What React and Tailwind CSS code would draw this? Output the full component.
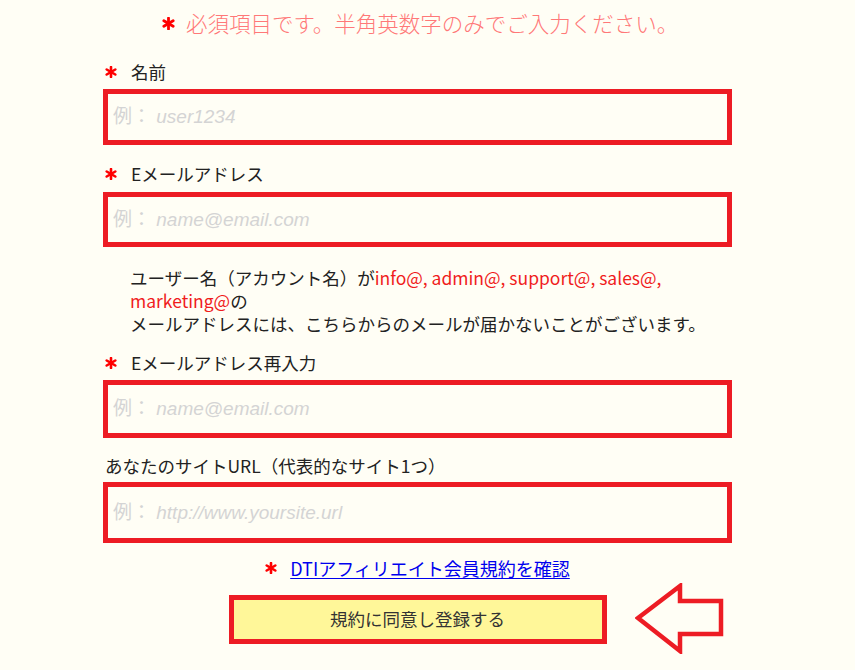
import React from 'react';

const RED = '#ed1c24';

// 赤いアスタリスク
const Star = ({ className = '' }) => (
  <svg viewBox="0 0 12 12" className={`w-[12px] h-[12px] shrink-0 ${className}`}>
    <g stroke="#ff0000" strokeWidth="2.6" strokeLinecap="round">
      <line x1="6" y1="1" x2="6" y2="11" />
      <line x1="1.7" y1="3.5" x2="10.3" y2="8.5" />
      <line x1="1.7" y1="8.5" x2="10.3" y2="3.5" />
    </g>
  </svg>
);

const Label = ({ children, required = true, className = '' }) => (
  <div className={`flex items-center h-[24px] text-[17.5px] leading-[24px] text-[#222] ${className}`}>
    {required && <Star className="ml-[2px] mr-[14px]" />}
    <span className="whitespace-nowrap">{children}</span>
  </div>
);

const Field = ({ placeholder, className = '' }) => (
  <input
    type="text"
    placeholder={placeholder}
    className={`block w-full border-[5px] border-[#ed1c24] bg-transparent pl-[5px] text-[19px] italic [font-synthesis:none] outline-none placeholder:text-[#d4d4d4] ${className}`}
    style={{ fontFamily: '"Liberation Sans", "Noto Sans CJK JP", sans-serif' }}
  />
);

const App = () => {
  return (
    <div
      className="w-[855px] h-[670px] overflow-hidden bg-[#fffef5]"
      style={{ fontFamily: '"Noto Sans CJK JP", "Noto Sans", sans-serif' }}
    >
      <div className="ml-[103px] w-[629px] pt-[9px]">
        {/* 注意書き */}
        <div className="flex items-center ml-[59px] h-[28px] text-[21.5px] leading-[28px] font-light text-[#ff7878]">
          <Star className="w-[13px] h-[13px] mr-[11px]" />
          <span className="whitespace-nowrap">必須項目です。半角英数字のみでご入力ください。</span>
        </div>

        <Label className="mt-[23px]">名前</Label>
        <Field placeholder="例： user1234" className="mt-[5px] h-[56px]" />

        <Label className="mt-[17px]">Eメールアドレス</Label>
        <Field placeholder="例： name@email.com" className="mt-[6px] h-[55px]" />

        <div className="mt-[19px] pl-[27px] text-[17.5px] leading-[23px] text-[#222] whitespace-nowrap">
          <div>
            ユーザー名（アカウント名）が<span className="text-[#f01c1c]">info@, admin@, support@, sales@,</span>
          </div>
          <div>
            <span className="text-[#f01c1c]">marketing@</span>の
          </div>
          <div>メールアドレスには、こちらからのメールが届かないことがございます。</div>
        </div>

        <Label className="mt-[16px]">Eメールアドレス再入力</Label>
        <Field placeholder="例： name@email.com" className="mt-[5px] h-[58px]" />

        <Label required={false} className="mt-[16px] pl-[2px]">
          あなたのサイトURL（代表的なサイト1つ）
        </Label>
        <Field placeholder="例： http://www.yoursite.url" className="mt-[4px] h-[61px]" />

        {/* 規約リンク */}
        <div className="mt-[13px] h-[24px] flex items-center justify-center">
          <Star className="mr-[13px]" />
          <a href="#" className="text-[18px] leading-[24px] text-[#0000ee] underline underline-offset-2">
            DTIアフィリエイト会員規約を確認
          </a>
        </div>

        {/* 登録ボタン */}
        <div className="relative mt-[15px] flex justify-center">
          <button
            type="button"
            className="w-[378px] h-[49px] border-[5px] border-[#ed1c24] bg-[#fff799] text-[17.5px] text-[#333]"
          >
            規約に同意し登録する
          </button>
          <svg
            viewBox="0 0 89 71"
            className="absolute left-[532px] top-[-12px] w-[89px] h-[71px]"
          >
            <polygon
              points="3,35 45,3 45,18 86,18 86,51 45,51 45,68"
              fill="none"
              stroke={RED}
              strokeWidth="4.5"
              strokeLinejoin="miter"
            />
          </svg>
        </div>
      </div>
    </div>
  );
};

export default App;
